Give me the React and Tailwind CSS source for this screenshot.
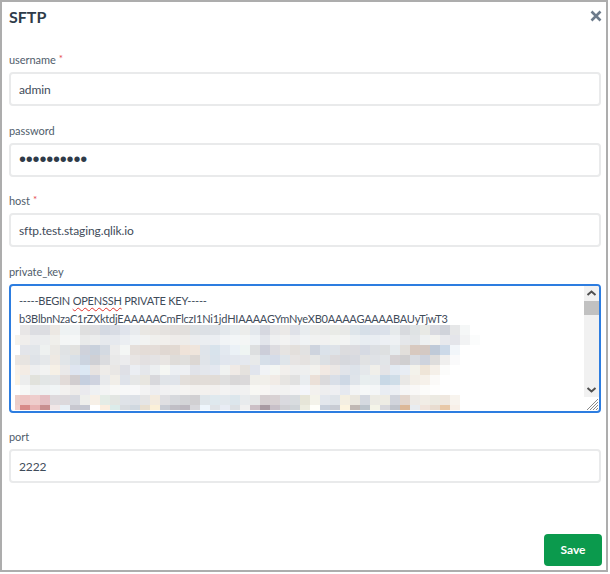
const ROWS = [
"e8e6e6 dcdde2 dcdde1 ece8e3 eef2f3 eff2f3 dfdfdf dfdfe1 d4d9e2 d8dce4 e0e4ec e8ebee e9e7e3 e8e5e1 e5e2df e3dfdd e2dfdc dde1e4 dce0e5 dde1e6 e3e8ec e9edef ecedeb e3e8ed d6d8e0 e6e6e8 ebe9e7 dfe1e8 e8ecef ebecea e9eaea e9ebe6 e8e9e7 dee5ea d6dfe8 dadfe8 dbe1ea e6eaeb d8dade dfe3e4 e8e9e5 d9dae0 d0d3da e6e7e8 f5f7f7 ffffff",
"f0eeec ebecee ebedee f0efeb f4f6f6 f5f7f7 e9eaea eceded e6e9ed e6e9ee ebeef2 f0f3f5 f2f3f2 f0f0ed f1efec efecea eeece9 ebedef ebeef1 ebeef2 f1f4f6 f3f6f7 f4f6f5 eef2f5 e2e5eb eff0f1 f3f3f2 edeef1 f0f3f5 f1f2f1 f1f1f1 f2f4f0 f3f4f3 ecf0f2 e8edf2 e9edf2 edf0f4 eef1f3 e5e7ea e2e5e7 eef1f2 f3f3f0 e8e9ed e4e5ea f2f3f4 fbfcfc",
"e3e5ea e2e6ea eef1f0 ebe9e5 e0e3e5 e2e2e0 cfd2db c9d1dc d4dae2 ececec f4f6f5 e5dfdb e4dcd7 e4ddd8 e0d8d2 e2d9d2 efe3d9 efe5dc dfe4ea d8e3ec e3e9f0 ebf1f6 eff5f3 dddfe0 ccced9 dddce0 e6e4e2 e3dfdc e2e2e2 ced4de dbe2ea dee3e8 dcdcde dcdce0 d6dae3 dcdfe3 dee0e1 e6ebee e2dfdb d8c9bf d4c9c3 bfcad8 ccd9e8 f2f6fa ffffff ffffff",
"e7e4e1 dfe3e8 e5e8ea eee9e3 e1e5e8 d9e0e7 ccd4e0 cfd0d5 dbdcdf e9e9e9 ececee e8e5e4 e3e0e1 e4e3e4 e8e5e2 dfdcd9 e0dfdd dcd7d3 e0e4e9 d9e2eb e1e6ee e3e7ee e5e9ef e8eaea d6dfe9 d5dce8 dfe5ea e7e4e3 e5e2e0 e6e7e6 dce0e4 dcdadc d6d8dd d8dae0 e1e2e3 dfe2e6 e2e5e8 d6d2d4 d0cfd0 d9dce1 ced3dd dedddc f0efee fafafb ffffff ffffff",
"f3ece5 eeeff0 f2f3f2 f6f0e6 eae9e9 dfe5f0 dce8f4 e7e3e1 eeece9 e9e7e5 dfe0e6 ebeef3 e5e7eb eceff1 f5f7f3 eceff3 eef0f3 e1e3e9 e4e7ec e4e8f0 f0f2f1 f0eae6 e5e2de e1e5ed f1f3f6 f4f6f3 f2efec eeeeee eeefef f3f2ee f2e9e3 ebe7e5 e1e4ea dde3ea e5e8eb f0efea e4e4e7 e3eaf2 e8edf4 f3f2eb efe5d8 f5f0e9 fcfcfb ffffff ffffff ffffff",
"eceded e1e2dc e2e6e6 e4e6e7 e2dbd8 d1cdcf c5cfdf cfd3df e8eaec f1eee8 dfe3ea e6e7e7 e8e6e0 d8d8dc e0e4e8 e0e4ea e3dfdb e1dcd7 e2ddd8 e1dcd7 dfdfdf d9d7d8 dbd9da f0efea f1efea f1ebe6 e7e5e2 e1e1e1 e9edf0 ebe0d8 dbdadc d9dfe8 ced8e5 dfe4ea e8eeef e8edef c8d8e6 cfdde8 e9e8e6 f3efe8 f6f1ea fbfaf8 ffffff ffffff ffffff ffffff",
"f7f8f7 eef0f0 eff2f3 f1f5f6 f3f1ef eeecea eaeaee eff1f3 f3f4f4 f8f8f6 f7f8f8 f8f8f9 f3f3f3 eeeef0 f1f1f2 f2f3f3 f5f4f2 f3f1ee f3f1ee f2f0ee f3f3f3 f0f0f1 f1f1f1 f8f8f4 f8f6f4 f3f2f2 f2f2f1 f4f4f5 f4f6fa f3f1ee eeeeef eeeff2 e6e9f0 f3f4f5 f6f8f8 f4f6f7 e9edf3 eceff4 f6f6f6 f9f8f7 fcfcfa fefefd ffffff ffffff ffffff ffffff",
"eec6c4 eecdcc e4bfc3 dedadd dcd9dc d8dae0 eeefec f7f0e7 e4ece6 e3e6e2 dfe3e8 dde1e7 e5e5e5 f3ebdf dfdfe2 d6d9dd d3d4d7 d1d0d2 dfe6ea dfe9ee e2e8ed dce6ec e8ebed e6e8e8 d6cfd1 d8d1d3 dadadf d8dcdf e6e5d8 f4f3ea e3e7ed dfe4e9 f4efe2 eae7df d5d9e0 ecebe4 eeece4 d1d4dc e3d6cd edeae6 f1ede6 eceae2 efe8e0 f8f4ee ffffff ffffff",
"d88a88 e8b4b4 c88f90 f0e6e6 e8f0f6 c8c8d0 c4c8d2 ffffff fbeee0 dcecea d8dce0 d0d8e0 e8dfd0 fbf0d8 c8ccd4 c0bfc6 bcb8c0 d8d8dc eef6fc e0e4e8 e8ecf4 dce0e4 f0f0f0 ccc0c6 a89aa2 c8c0c8 d0d0d4 cfd4d8 ecece0 fffffa c8d0dc c8ccd4 fcf4e0 c0b8b4 bcc4cc f4f4e8 d8d8dc c0c4cc dcb898 e8ecf0 f0e4dc e8dcd0 e8c8a8 f8f0e8 ffffff ffffff",
];
const LEFT = ["ffffff","f6f3ed","ffffff","ebe6e2","f8f1e9","fbf3e6","ffffff","ebcfca","f0d0cc"];

function Mosaic() {
  return (
    <svg width="470" height="85" viewBox="0 0 470 85" shapeRendering="crispEdges" className="absolute left-[4px] top-[39px]">
      {ROWS.map((row, r) => {
        const h = r === 8 ? 5 : 10;
        return (
          <g key={r}>
            <rect x="0" y={r * 10} width="5" height={h} fill={`#${LEFT[r]}`} />
            {row.split(" ").map((c, i) => (
              <rect key={i} x={5 + i * 10} y={r * 10} width="10" height={h} fill={`#${c}`} />
            ))}
          </g>
        );
      })}
    </svg>
  );
}

function Field({ label, required, value, type = "text" }) {
  return (
    <div>
      <Label required={required}>{label}</Label>
      <input
        readOnly
        type={type}
        value={value}
        className={
          type === "password"
            ? "block h-[34px] w-full rounded-[4px] border-2 border-[#e9eaeb] bg-white px-[8px] font-['Liberation_Sans'] text-[20px] tracking-[-0.2px] text-[#2f3b49] outline-none"
            : "block h-[34px] w-full rounded-[4px] border-2 border-[#e9eaeb] bg-white px-[8px] text-[12px] tracking-[-0.12px] text-[#3f4c5a] outline-none"
        }
      />
    </div>
  );
}

function Label({ children, required }) {
  return (
    <div className="flex h-[24px] items-center gap-[3px] pt-[1px] text-[11px] tracking-[-0.05px] text-[#505d6b]">
      <span>{children}</span>
      {required && <span className="-mt-[4px] text-[10px] text-[#e5484d]">*</span>}
    </div>
  );
}

export default function App() {
  return (
    <div className="h-[574px] w-[610px] bg-white" style={{ fontFamily: 'Lato, sans-serif' }}>
      <div className="flex h-[572px] w-[608px] flex-col border-2 border-[#adadad] bg-white pl-[7px] pr-[5px] pb-[4px]">
        <div className="flex h-[46px] items-start justify-between pt-[3px]">
          <h1 className="text-[16px] font-bold leading-[24px] text-[#2e3b49]">SFTP</h1>
          <svg width="12" height="12" viewBox="0 0 12 12" className="-mr-[1px] mt-[5px]">
            <path d="M1.5 1.5 10.5 10.5M10.5 1.5 1.5 10.5" stroke="#6d7b8b" strokeWidth="2.6" fill="none" />
          </svg>
        </div>
        <div className="flex flex-col gap-[12.5px]">
          <Field label="username" required value="admin" />
          <Field label="password" type="password" value="••••••••••" />
          <Field label="host" required value="sftp.test.staging.qlik.io" />
          <div>
            <Label>private_key</Label>
            <div className="relative h-[129px] w-full overflow-hidden rounded-[4px] border-2 border-[#2d7de0] bg-white px-[8px] pt-[6.5px] text-[11px] leading-[17.5px] tracking-[-0.22px] text-[#3f4c5a]">
              <div className="whitespace-nowrap">
                -----BEGIN <span className="underline decoration-wavy decoration-[#e5332e] decoration-1 underline-offset-2">OPENSSH</span> PRIVATE KEY-----
              </div>
              <div className="whitespace-nowrap">b3BlbnNzaC1rZXktdjEAAAAACmFlczI1Ni1jdHIAAAAGYmNyeXB0AAAAGAAAABAUyTjwT3</div>
              <Mosaic />
              <div className="absolute right-0 top-0 flex h-[111px] w-[15px] flex-col items-center bg-[#f1f1f1]">
                <svg width="15" height="15" viewBox="0 0 15 15">
                  <path d="M3.5 9 7.5 5.5 11.5 9" stroke="#505050" strokeWidth="2" fill="none" />
                </svg>
                <div className="h-[14px] w-[15px] bg-[#c1c1c1]" />
                <div className="flex-1" />
                <svg width="15" height="15" viewBox="0 0 15 15">
                  <path d="M3.5 6 7.5 9.5 11.5 6" stroke="#505050" strokeWidth="2" fill="none" />
                </svg>
              </div>
              <svg width="14" height="14" viewBox="0 0 14 14" className="absolute bottom-0 right-0">
                <path d="M13 2 2 13M13 5 5 13M13 8 8 13M13 11 11 13" stroke="#8a8a8a" strokeWidth="1" fill="none" />
              </svg>
            </div>
          </div>
          <Field label="port" value="2222" />
        </div>
        <div className="mt-auto flex justify-end">
          <button className="-mr-[1px] h-[32px] w-[58px] rounded-[4px] bg-[#0b9a4d] text-[12px] font-bold text-white">Save</button>
        </div>
      </div>
    </div>
  );
}
